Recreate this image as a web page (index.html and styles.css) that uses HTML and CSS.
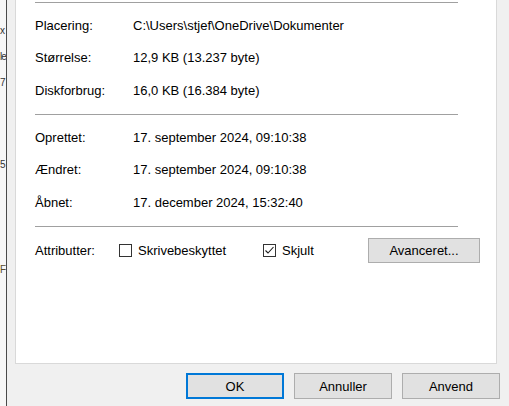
FILE: index.html
```html
<!DOCTYPE html>
<html lang="da">
<head>
  <meta charset="UTF-8" />
  <title>Egenskaber</title>
  <link rel="stylesheet" href="styles.css">
</head>
<body>
  <div class="screen">
    <div class="behind">
      <div class="frag f1">x</div>
      <div class="frag f2">le</div>
      <div class="frag f3">7</div>
      <div class="frag f4">5</div>
      <div class="frag f5">F</div>
    </div>
    <div class="edge"></div>

    <div class="dialog">
      <div class="panel">
        <div class="sep"></div>
        <div class="section">
          <div class="row"><span class="label">Placering:</span><span class="value">C:\Users\stjef\OneDrive\Dokumenter</span></div>
          <div class="row"><span class="label">Størrelse:</span><span class="value">12,9 KB (13.237 byte)</span></div>
          <div class="row"><span class="label">Diskforbrug:</span><span class="value">16,0 KB (16.384 byte)</span></div>
        </div>

        <div class="sep"></div>
        <div class="section">
          <div class="row"><span class="label">Oprettet:</span><span class="value">17. september 2024, 09:10:38</span></div>
          <div class="row"><span class="label">Ændret:</span><span class="value">17. september 2024, 09:10:38</span></div>
          <div class="row"><span class="label">Åbnet:</span><span class="value">17. december 2024, 15:32:40</span></div>
        </div>

        <div class="sep"></div>
        <div class="attrs">
          <span class="attr-label">Attributter:</span>
          <label class="check first"><span class="box"></span>Skrivebeskyttet</label>
          <label class="check second">
            <span class="box">
              <svg width="11" height="11" viewBox="0 0 11 11"><polyline points="1.5,5.5 4,8 9.5,2" fill="none" stroke="#1a1a1a" stroke-width="1.1"/></svg>
            </span>Skjult
          </label>
          <button class="btn adv">Avanceret...</button>
        </div>
      </div>

      <div class="actions">
        <button class="btn default">OK</button>
        <button class="btn">Annuller</button>
        <button class="btn">Anvend</button>
      </div>
    </div>
  </div>
</body>
</html>
```

FILE: styles.css
```css
body {
  margin: 0;
  font-family: "Liberation Sans", Arial, sans-serif;
  font-size: 13px;
  color: #000;
  background-color: #f0f0f0;
  overflow: hidden;
}
.screen {
  display: flex;
  width: 509px;
  height: 406px;
}
.behind {
  width: 6px;
  background-color: #f7f7f7;
  overflow: hidden;
  color: #333;
  font-size: 10px;
  line-height: 12px;
}
.frag {
  white-space: nowrap;
}
.f1 { margin-top: 25px; }
.f2 { margin-top: 14px; letter-spacing: -1px; }
.f3 { margin-top: 14px; }
.f4 { margin-top: 70px; }
.f5 { margin-top: 93px; color: #5a4a2a; }
.edge {
  width: 1px;
  background-color: #4a4a4a;
}
.dialog {
  flex: 1;
  padding-left: 8px;
  display: flex;
  flex-direction: column;
}
.panel {
  width: 482px;
  height: 364px;
  background-color: #fff;
  border: 1px solid #d9d9d9;
  border-top: none;
  padding-top: 2px;
  box-sizing: border-box;
}
.sep {
  width: 423px;
  height: 1px;
  margin-left: 19px;
  background-color: #a0a0a0;
}
.section {
  padding: 6px 0 7.5px 19px;
}
.row {
  display: flex;
  align-items: center;
  height: 32.5px;
}
.label {
  width: 98px;
}
.attrs {
  display: flex;
  align-items: center;
  margin-top: 11px;
  padding-left: 19px;
  height: 25px;
}
.attr-label {
  width: 84px;
}
.check {
  display: flex;
  align-items: center;
  gap: 6px;
}
.check.first { width: 144px; }
.check.second { width: 105px; }
.box {
  width: 13px;
  height: 13px;
  box-sizing: border-box;
  border: 1px solid #333;
  background-color: #fff;
  display: flex;
  align-items: center;
  justify-content: center;
}
.btn {
  font-family: "Liberation Sans", Arial, sans-serif;
  font-size: 13px;
  color: #000;
  background-color: #e1e1e1;
  border: 1px solid #adadad;
  padding: 0;
  box-sizing: border-box;
}
.adv {
  width: 112px;
  height: 25px;
}
.actions {
  display: flex;
  justify-content: flex-end;
  gap: 10px;
  padding: 9px 9px 0 0;
}
.actions .btn {
  width: 98px;
  height: 26px;
}
.btn.default {
  border: 2px solid #0078d7;
}
```
